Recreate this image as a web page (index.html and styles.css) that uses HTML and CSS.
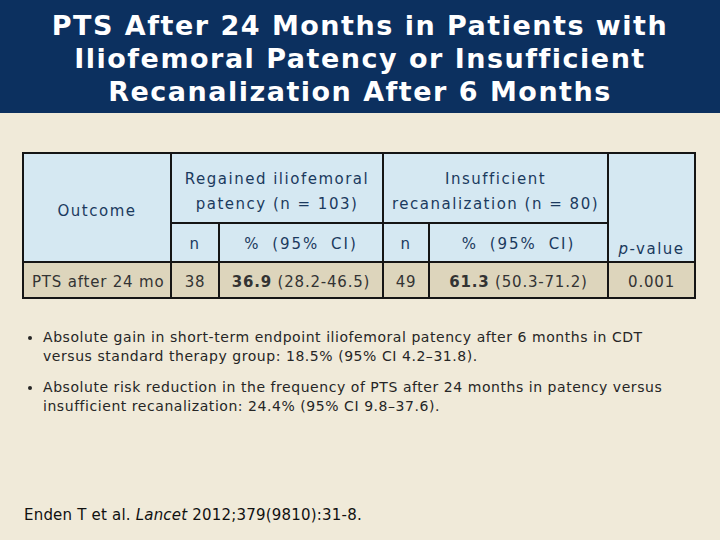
FILE: index.html
```html
<!DOCTYPE html>
<html>
<head>
<meta charset="utf-8">
<link rel="stylesheet" href="styles.css">
</head>
<body>
<header class="titlebar">
  <h1 class="title">PTS After 24 Months in Patients with<br>Iliofemoral Patency or Insufficient<br>Recanalization After 6 Months</h1>
</header>
<main class="content">
  <table class="data">
    <colgroup>
      <col class="c1"><col class="c2"><col class="c3"><col class="c4"><col class="c5"><col class="c6">
    </colgroup>
    <thead>
      <tr class="h1row">
        <th rowspan="2" class="outcome">Outcome</th>
        <th colspan="2" class="group">Regained iliofemoral<br>patency (n = 103)</th>
        <th colspan="2" class="group">Insufficient<br>recanalization (n = 80)</th>
        <th rowspan="2" class="pval"><i>p</i>-value</th>
      </tr>
      <tr class="h2row">
        <th class="sub">n</th>
        <th class="sub pct">% (95% CI)</th>
        <th class="sub">n</th>
        <th class="sub pct">% (95% CI)</th>
      </tr>
    </thead>
    <tbody>
      <tr class="drow">
        <td class="label">PTS after 24 mo</td>
        <td>38</td>
        <td><b>36.9</b> (28.2-46.5)</td>
        <td>49</td>
        <td><b>61.3</b> (50.3-71.2)</td>
        <td>0.001</td>
      </tr>
    </tbody>
  </table>
  <ul class="bullets">
    <li>Absolute gain in short-term endpoint iliofemoral patency after 6 months in CDT<br>versus standard therapy group: 18.5% (95% CI 4.2–31.8).</li>
    <li>Absolute risk reduction in the frequency of PTS after 24 months in patency versus<br>insufficient recanalization: 24.4% (95% CI 9.8–37.6).</li>
  </ul>
  <p class="ref">Enden T et al. <i>Lancet</i> 2012;379(9810):31-8.</p>
</main>
</body>
</html>
```
FILE: styles.css
```css
html, body {
  margin: 0;
  padding: 0;
}
body {
  width: 720px;
  height: 540px;
  background: #f0ead9;
  font-family: "DejaVu Sans", Verdana, sans-serif;
  overflow: hidden;
}
.titlebar {
  background: #0c305f;
  height: 113px;
  box-sizing: border-box;
  padding-top: 9px;
}
.title {
  margin: 0;
  color: #ffffff;
  font-family: "DejaVu Sans", sans-serif;
  font-weight: bold;
  font-size: 27px;
  letter-spacing: 1.5px;
  line-height: 33px;
  text-align: center;
}
.content {
  padding: 39px 0 0 22px;
}
.data {
  border-collapse: collapse;
  table-layout: fixed;
  width: 674px;
  font-size: 15px;
}
.c1 { width: 148px; }
.c2 { width: 48px; }
.c3 { width: 164px; }
.c4 { width: 46px; }
.c5 { width: 179px; }
.c6 { width: 87px; }
.data th, .data td {
  border: 2px solid #151515;
  padding: 0;
  text-align: center;
}
.data th {
  background: #d5e8f2;
  color: #1b3a5e;
  font-weight: normal;
  letter-spacing: 1.5px;
}
.data th.sub { padding-top: 2px; }
.data th.pct { letter-spacing: 2px; word-spacing: 5px; }
.h1row { height: 70px; }
.h2row { height: 39px; }
.drow { height: 36px; }
.data th.group {
  line-height: 25px;
  padding-top: 8px;
}
.data th.outcome { vertical-align: middle; padding-top: 6px; }
.data th.pval { vertical-align: bottom; padding-bottom: 3px; }
.data td {
  background: #ddd5bc;
  color: #333333;
  letter-spacing: 0.8px;
  padding-top: 3px;
}
.data td.label { text-align: left; padding-left: 8px; }
.bullets {
  margin: 29px 0 0 0;
  padding: 0 0 0 21px;
  font-size: 14px;
  letter-spacing: 0.55px;
  line-height: 19px;
  color: #262626;
  list-style: disc;
}
.bullets li { margin-bottom: 12px; }
.ref {
  margin: 90px 0 0 2px;
  font-size: 15px;
  letter-spacing: 0.2px;
  color: #111111;
}
```
